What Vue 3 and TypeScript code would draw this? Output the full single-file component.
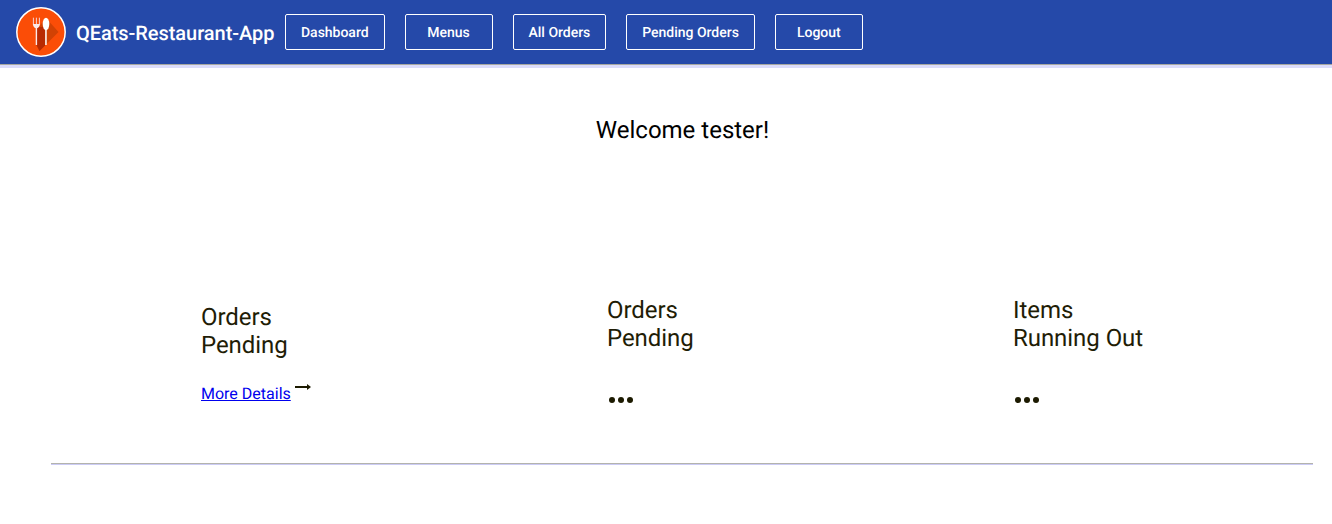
<script setup lang="ts">
const navItems: string[] = ['Dashboard', 'Menus', 'All Orders', 'Pending Orders', 'Logout']
</script>

<template>
  <div class="page">
    <header class="bar">
      <svg class="logo" viewBox="0 0 50 50" aria-hidden="true">
        <circle cx="25" cy="25" r="24.2" fill="#fb4d07" stroke="#fff" stroke-width="1.5" />
        <path d="M30 11 L42.5 25 L23.5 44 L20.5 38 L21 22 Z" fill="#d24204" />
        <path d="M21 20 L29 20 L29 38.5 L23.5 44 L20.5 38 Z" fill="#b82a02" />
        <path d="M17.4 10.7v7M20.4 10.7v7M23.4 10.7v7" stroke="#f6cfd0" stroke-width="1" fill="none" />
        <path d="M16.9 17h7c0 2.3-1.4 3.8-2.8 4.3V38h-1.4V21.3c-1.4-.5-2.8-2-2.8-4.3z" fill="#fbeaea" />
        <ellipse cx="30" cy="17" rx="3.3" ry="6.2" fill="#fff" />
        <rect x="29.2" y="22" width="1.5" height="16" fill="#fff" />
      </svg>
      <span class="title">QEats-Restaurant-App</span>
      <nav class="nav">
        <a v-for="item in navItems" :key="item" class="nav-btn">{{ item }}</a>
      </nav>
    </header>

    <main class="main">
      <h1 class="welcome">Welcome tester!</h1>

      <section class="cards">
        <div class="card first">
          <h2 class="card-title">Orders<br />Pending</h2>
          <div class="more">
            <a class="link" href="#">More Details</a>
            <svg class="arrow" viewBox="0 0 16 8" aria-hidden="true">
              <path d="M0 4h12.5" stroke="#1c1a00" stroke-width="2" />
              <path d="M12 1 16 4l-4 3z" fill="#1c1a00" />
            </svg>
          </div>
        </div>
        <div class="card">
          <h2 class="card-title">Orders<br />Pending</h2>
          <div class="dots"><i></i><i></i><i></i></div>
        </div>
        <div class="card">
          <h2 class="card-title">Items<br />Running Out</h2>
          <div class="dots"><i></i><i></i><i></i></div>
        </div>
      </section>

      <hr class="rule" />
    </main>
  </div>
</template>

<style>
html,
body {
  margin: 0;
  background: #fff;
}
</style>

<style scoped>
.page {
  width: 1332px;
  height: 524px;
  overflow: hidden;
  font-family: Roboto, "Liberation Sans", sans-serif;
  text-rendering: geometricPrecision;
}
.bar {
  height: 65px;
  box-sizing: border-box;
  display: flex;
  align-items: center;
  padding-left: 16px;
  background: #2549a9;
  border-bottom: 1px solid #a8a8a0;
  box-shadow: 0 3px 0 #dcdcfa;
}
.logo {
  width: 50px;
  height: 50px;
  flex: none;
}
.title {
  margin-left: 10px;
  padding-top: 1px;
  width: 199px;
  font-size: 20px;
  font-weight: 500;
  letter-spacing: -0.05px;
  color: #fff;
  white-space: nowrap;
}
.nav {
  display: flex;
  gap: 20px;
  margin-left: 10px;
}
.nav-btn {
  box-sizing: border-box;
  height: 36px;
  min-width: 88px;
  padding: 1px 15px 0;
  display: flex;
  align-items: center;
  justify-content: center;
  border: 1px solid #fff;
  border-radius: 2px;
  color: #fff;
  font-size: 14px;
  font-weight: 500;
  letter-spacing: -0.02px;
}
.main {
  display: flex;
  flex-direction: column;
}
.welcome {
  margin: 51px 0 0;
  padding-left: 33px;
  font-size: 24px;
  font-weight: 400;
  line-height: 28px;
  text-align: center;
  color: #000;
}
.cards {
  display: grid;
  grid-template-columns: repeat(3, 406px);
  margin-top: 152px;
  padding-left: 201px;
}
.card {
  color: #1f1d06;
}
.card.first {
  padding-top: 7px;
}
.card-title {
  margin: 0;
  font-size: 24px;
  font-weight: 400;
  line-height: 28px;
  letter-spacing: -0.05px;
}
.more {
  display: flex;
  align-items: flex-start;
  margin-top: 23px;
  height: 24px;
}
.link {
  font-size: 16px;
  line-height: 24px;
  color: #0000ee;
  text-decoration: underline;
}
.arrow {
  width: 16px;
  height: 8px;
  margin: 1px 0 0 4px;
}
.dots {
  display: flex;
  gap: 3px;
  margin-top: 45px;
  padding-left: 2px;
}
.dots i {
  width: 6px;
  height: 6px;
  border-radius: 50%;
  background: #1c1a00;
}
.rule {
  box-sizing: border-box;
  width: 1262px;
  height: 2px;
  margin: 57px 0 0 51px;
  border: 0;
  border-top: 1px solid #b3b3ad;
  border-bottom: 1px solid #ccccf5;
}
</style>
